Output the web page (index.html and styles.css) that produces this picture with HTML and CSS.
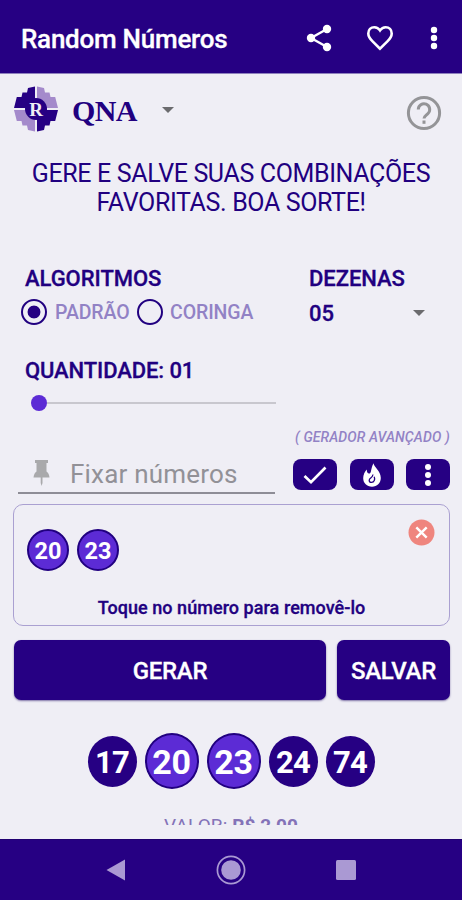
FILE: index.html
```html
<!DOCTYPE html>
<html lang="pt-BR">
<head>
<meta charset="utf-8">
<title>Random Números</title>
<link rel="stylesheet" href="styles.css">
</head>
<body>
<div class="app">
  <header class="topbar">
    <h1>Random Números</h1>
    <svg class="share" width="26" height="28" viewBox="0 0 26 28"><path d="M21 5 5 14l16 9" fill="none" stroke="#fff" stroke-width="2.4"/><g fill="#fff"><circle cx="21" cy="5" r="4.200"/><circle cx="5" cy="14" r="4.200"/><circle cx="21" cy="23" r="4.200"/></g></svg>
    <svg class="heart" width="28" height="26" viewBox="0 0 28 26"><path d="M14 23.700 6.600 16.400C3.600 13.500 2.300 11.400 2.300 8.500 2.300 4.900 4.900 2.200 8.300 2.200c2.300 0 4.400 1.200 5.700 3.200 1.300-2 3.400-3.200 5.700-3.200 3.400 0 6 2.700 6 6.300 0 2.900-1.300 5-4.300 7.900z" fill="none" stroke="#fff" stroke-width="2.600"/></svg>
    <svg width="8" height="24" viewBox="0 0 8 24" fill="#fff"><circle cx="4" cy="4" r="3.200"/><circle cx="4" cy="12" r="3.200"/><circle cx="4" cy="20" r="3.200"/></svg>
  </header>

  <main class="content">
    <section class="brand">
      <svg class="logo" width="46" height="46" viewBox="0 0 46 46">
        <g fill="#260083"><path id="q" d="M22 .5 15 2l-1 4.500H9.500L8.500 11H3.800L1 22h21z"/><path d="M24 45.500 31 44l1-4.500h4.500l1-4.500h4.700L45 24H24z"/></g>
        <g fill="#a48acb"><path d="M24 .5 31 2l1 4.500h4.500l1 4.500h4.700L45 22H24z"/><path d="M22 45.500 15 44l-1-4.500H9.500L8.500 35H3.800L1 24h21z"/></g>
        <circle cx="23" cy="23" r="11" fill="#260083"/>
        <text class="logo-letter" x="23" y="29.500" text-anchor="middle">R</text>
      </svg>
      <span class="brand-name">QNA</span>
      <i class="caret"></i>
      <svg class="help" width="36" height="36" viewBox="0 0 36 36" fill="none" stroke="#949497" stroke-width="3"><circle cx="18" cy="18" r="15.600"/><path d="M12.300 14.500a5.700 5.700 0 1 1 9.700 4c-2 1.900-4 2.700-4 5"/><path d="M18 25.500v3.300"/></svg>
    </section>

    <p class="intro"><span>GERE E SALVE SUAS COMBINAÇÕES</span><br><span>FAVORITAS. BOA SORTE!</span></p>

    <section class="options">
      <div class="algorithms">
        <h2>ALGORITMOS</h2>
        <div class="radios">
          <i class="radio checked"></i><span class="padrao">PADRÃO</span>
          <i class="radio"></i><span class="coringa">CORINGA</span>
        </div>
      </div>
      <div class="tens">
        <h2>DEZENAS</h2>
        <div class="select"><span>05</span><i class="caret"></i></div>
      </div>
    </section>

    <section class="quantity">
      <h2>QUANTIDADE: 01</h2>
      <div class="slider"><i class="thumb"></i><i class="track"></i></div>
    </section>

    <section class="fix">
      <div class="field">
        <svg width="17" height="28" viewBox="0 0 17 28" fill="#a9a9ab"><path d="M2 1h13v3h-1.500v8.500q2.500 1.500 3 6H.5q.5-4.500 3-6V4H2z"/><path d="M7.700 18h1.800v6l-.9 3-.9-3z"/></svg>
        <span>Fixar números</span>
      </div>
      <div class="advanced">
        <p>( GERADOR AVANÇADO )</p>
        <div class="tools">
          <b><svg width="24" height="20" viewBox="0 0 24 20"><path d="M1.500 11 8 17.200 22.500 2.500" fill="none" stroke="#fff" stroke-width="2.700"/></svg></b>
          <b><svg width="20" height="26" viewBox="0 0 20 26"><path d="M11.500 1.200C12 5 18.800 9 18.800 16c0 5-3.800 8.700-8.800 8.700S1.200 21.200 1.200 16.300c0-3.500 1.600-6.500 3.600-8.700-.1 2.600.9 4 2.200 4C9.700 11.600 8.500 7 11.500 1.200z" fill="#fff"/><path d="M10.800 12.500c.6 2.800-3.600 3.300-3.600 5.700 0 1.300 1 2.200 2.400 2.200 2.600 0 3.700-2.900 2.600-5.600" fill="none" stroke="#260083" stroke-width="1.300"/></svg></b>
          <b><svg width="8" height="24" viewBox="0 0 8 24" fill="#fff"><circle cx="4" cy="4" r="3"/><circle cx="4" cy="12" r="3"/><circle cx="4" cy="20" r="3"/></svg></b>
        </div>
      </div>
    </section>

    <section class="pinned">
      <div class="pins">
        <span class="chip">20</span><span class="chip">23</span>
        <svg class="close" width="27" height="27" viewBox="0 0 27 27"><circle cx="13.500" cy="13.500" r="13" fill="#ef857e"/><path d="m8.300 8.300 10.400 10.400m0-10.400L8.300 18.700" stroke="#fff" stroke-width="2.400"/></svg>
      </div>
      <p>Toque no número para removê-lo</p>
    </section>

    <section class="actions">
      <button class="generate">GERAR</button><button class="save">SALVAR</button>
    </section>

    <section class="balls">
      <span class="ball">17</span><span class="ball hit">20</span><span class="ball hit">23</span><span class="ball">24</span><span class="ball">74</span>
    </section>

    <div class="price"><p>VALOR: <b>R$ 2,00</b></p></div>
  </main>

  <nav class="navbar">
    <svg width="20" height="22" viewBox="0 0 20 22"><path d="M.5 11 19 .5v21z" fill="#aa99d3"/></svg>
    <svg width="30" height="30" viewBox="0 0 30 30"><circle cx="15" cy="15" r="13.600" fill="none" stroke="#aa99d3" stroke-width="1.700"/><circle cx="15" cy="15" r="9.800" fill="#aa99d3"/></svg>
    <svg width="20" height="20" viewBox="0 0 20 20"><rect width="20" height="20" rx="1.500" fill="#aa99d3"/></svg>
  </nav>
</div>
</body>
</html>
```
FILE: styles.css
```css
* { box-sizing: border-box; }
body { margin: 0; font-family: Roboto, sans-serif; color: #210080; background: #efeef5; }
h1, h2, p { margin: 0; }
svg, i { display: block; flex: none; }
span, p, h1, h2 { white-space: nowrap; }
.app { width: 462px; height: 900px; display: flex; flex-direction: column; overflow: hidden; }

.topbar { height: 74px; background: #260083; border-bottom: 1px solid #8e80bd; display: flex; align-items: center; padding: 3px 24px 0 21px; flex: none; }
.topbar h1 { color: #fff; font-size: 26px; font-weight: 500; line-height: 32px; letter-spacing: -.25px; margin: 2px auto 0 0; -webkit-text-stroke: .3px; }
.share { margin-right: 34px; }
.heart { margin-right: 36px; }

.content { height: 765px; flex: none; }
.brand { height: 77px; display: flex; align-items: flex-start; padding: 12px 20px 0 13px; }
.logo-letter { font: bold 19px "Liberation Serif", serif; fill: #efeef5; }
.brand-name { font: bold 30px/38px "Liberation Serif", serif; letter-spacing: -.6px; margin: 6px 0 0 13px; }
.caret { width: 0; height: 0; border: 6px solid transparent; border-top-color: #6b6b6e; border-bottom: 0; }
.brand .caret { margin: 21px 0 0 25px; }
.help { margin: 9px 0 0 auto; }

.intro { height: 112px; padding-top: 9px; text-align: center; font-size: 25px; line-height: 28.500px; letter-spacing: -.36px; }

.options { height: 90px; display: flex; }
h2 { font-size: 22px; line-height: 26px; font-weight: 500; letter-spacing: -.05px; -webkit-text-stroke: .3px; }
.algorithms { width: 283px; padding: 3px 0 0 25px; flex: none; }
.radios { display: flex; align-items: center; height: 30px; margin: 5px 0 0 -4px; font-size: 19.500px; font-weight: 500; color: #9282c5; letter-spacing: -.1px; }
.radio { width: 26px; height: 26px; border: 2.500px solid #210080; border-radius: 50%; }
.checked { background: radial-gradient(circle, #260083 6px, transparent 6.800px); }
.padrao { width: 74px; margin: 1px 8px 0 8px; }
.coringa { margin: 1px 0 0 7px; }
.tens { padding: 3px 0 0 26px; }
.select { display: flex; align-items: center; width: 116px; height: 30px; margin-top: 6px; justify-content: space-between; font-size: 22px; font-weight: 500; -webkit-text-stroke: .3px; }

.quantity { height: 72px; padding: 5px 0 0 25px; }
.quantity h2 { letter-spacing: -.1px; }
.slider { display: flex; align-items: center; height: 16px; margin: 11px 0 0 6px; }
.thumb { width: 16px; height: 16px; border-radius: 50%; background: #5c2bd5; }
.track { width: 229px; height: 2px; background: #c8c7ce; }

.fix { height: 79px; display: flex; padding-left: 18px; }
.field { width: 257px; height: 69px; border-bottom: 2px solid #8e8d96; display: flex; padding: 34px 0 0 15px; font-size: 26px; line-height: 30px; letter-spacing: .2px; color: #929197; }
.field span { margin-left: 20px; }
.advanced { width: 157px; margin-left: 18px; padding-top: 4px; }
.advanced p { font-size: 14px; line-height: 17px; font-weight: 500; font-style: italic; letter-spacing: .12px; color: #9282c5; margin-left: 2px; }
.tools { display: flex; justify-content: space-between; margin-top: 13px; }
.tools b { width: 44px; height: 31px; border-radius: 8px; background: #260083; display: grid; place-items: center; }

.pinned { height: 122px; margin: 0 12px 0 13px; border: 1.500px solid #aaa0d1; border-radius: 10px; }
.pins { display: flex; padding: 24px 14px 0 13px; gap: 8px; height: 91px; }
.chip { width: 42px; height: 42px; border-radius: 50%; background: #5c2bd5; border: 2px solid #210080; color: #fff; font-weight: 700; font-size: 23.500px; line-height: 40px; text-align: center; }
.close { margin: -10px 0 0 auto; }
.pinned p { text-align: center; font-size: 18px; line-height: 24px; font-weight: 500; letter-spacing: .05px; -webkit-text-stroke: .3px; }

.actions { display: flex; gap: 11px; padding: 14px 12px 0 14px; height: 74px; }
button { border: 0; padding: 2px 0 0; height: 60px; border-radius: 7px; background: #260083; color: #fff; font: 500 24px Roboto, sans-serif; letter-spacing: -.3px; -webkit-text-stroke: .3px; box-shadow: 0 1px 2px #7e72a6; }
.generate { width: 312px; }
.save { width: 113px; }

.balls { height: 111px; display: flex; align-items: center; justify-content: center; padding-top: 11px; gap: 8px; }
.ball { width: 49px; height: 51px; border-radius: 50%; background: #260083; color: #fff; font-size: 31px; letter-spacing: -.8px; line-height: 53px; font-weight: 700; text-align: center; }
.hit { width: 54px; height: 56px; background: #5c2bd5; border: 2px solid #210080; font-size: 34px; letter-spacing: -.3px; line-height: 55px; }

.price { height: 9px; margin-top: 5px; overflow: hidden; text-align: center; font-size: 19px; line-height: 24px; letter-spacing: .1px; color: #8473b8; }
.price p { margin-top: -2px; }
.navbar { height: 61px; background: #260083; border-top: 1px solid #210070; display: flex; align-items: center; justify-content: center; gap: 90px; padding-right: 1px; padding-bottom: 1px; flex: none; }
```
